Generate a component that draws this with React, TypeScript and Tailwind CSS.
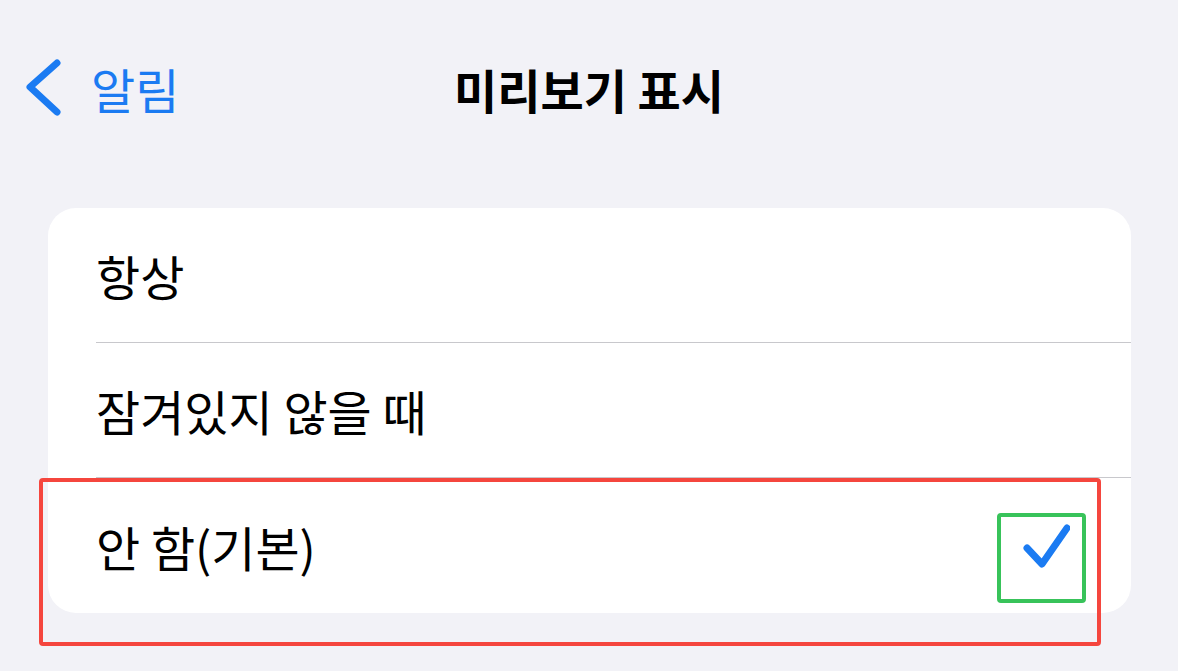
import React from 'react';

const font = { fontFamily: '"Noto Sans CJK KR", "Noto Sans", sans-serif' };

const options = ['항상', '잠겨있지 않을 때', '안 함(기본)'];

export default function App() {
  const selected = 2;
  return (
    <div
      className="relative w-full h-[671px] bg-[#f2f2f7] overflow-hidden text-black"
      style={font}
    >
      {/* nav bar */}
      <div className="relative h-[136px] pt-[40px]">
        <div className="flex items-center h-[96px]">
          <div className="flex items-center pl-[26px] text-[#1b7bf2]">
            <svg width="38" height="60" viewBox="0 0 38 60" fill="none">
              <polyline
                points="31,5 4,29 31,54"
                stroke="currentColor"
                strokeWidth="7"
                strokeLinecap="round"
                strokeLinejoin="round"
              />
            </svg>
            <span className="ml-[27px] text-[48px] leading-none">알림</span>
          </div>
        </div>
        <div className="absolute inset-x-0 top-[40px] h-[96px] flex items-center justify-center">
          <span className="text-[47px] font-semibold leading-none">미리보기 표시</span>
        </div>
      </div>

      {/* option list */}
      <div className="mt-[72px] ml-[48px] w-[1083px] bg-white rounded-[28px] overflow-hidden">
        {options.map((label, i) => (
          <div key={label} className="pl-[48px]">
            <div
              className={`flex items-center justify-between h-[135px] pr-[61px] ${
                i < options.length - 1 ? 'border-b border-[#c8c8cc]' : ''
              }`}
            >
              <span className="text-[48px] leading-none">{label}</span>
              {i === selected && (
                <svg width="48" height="48" viewBox="0 0 48 48" fill="none">
                  <polyline
                    points="5,26 20,42 45,6"
                    stroke="#1b7bf2"
                    strokeWidth="7"
                    strokeLinecap="round"
                    strokeLinejoin="round"
                  />
                </svg>
              )}
            </div>
          </div>
        ))}
      </div>

      {/* annotation boxes */}
      <div className="absolute left-[39px] top-[478px] w-[1062px] h-[168px] border-4 border-[#f5463e] rounded-[4px]" />
      <div className="absolute left-[997px] top-[513px] w-[89px] h-[90px] border-4 border-[#38c35a] rounded-[4px]" />
    </div>
  );
}
